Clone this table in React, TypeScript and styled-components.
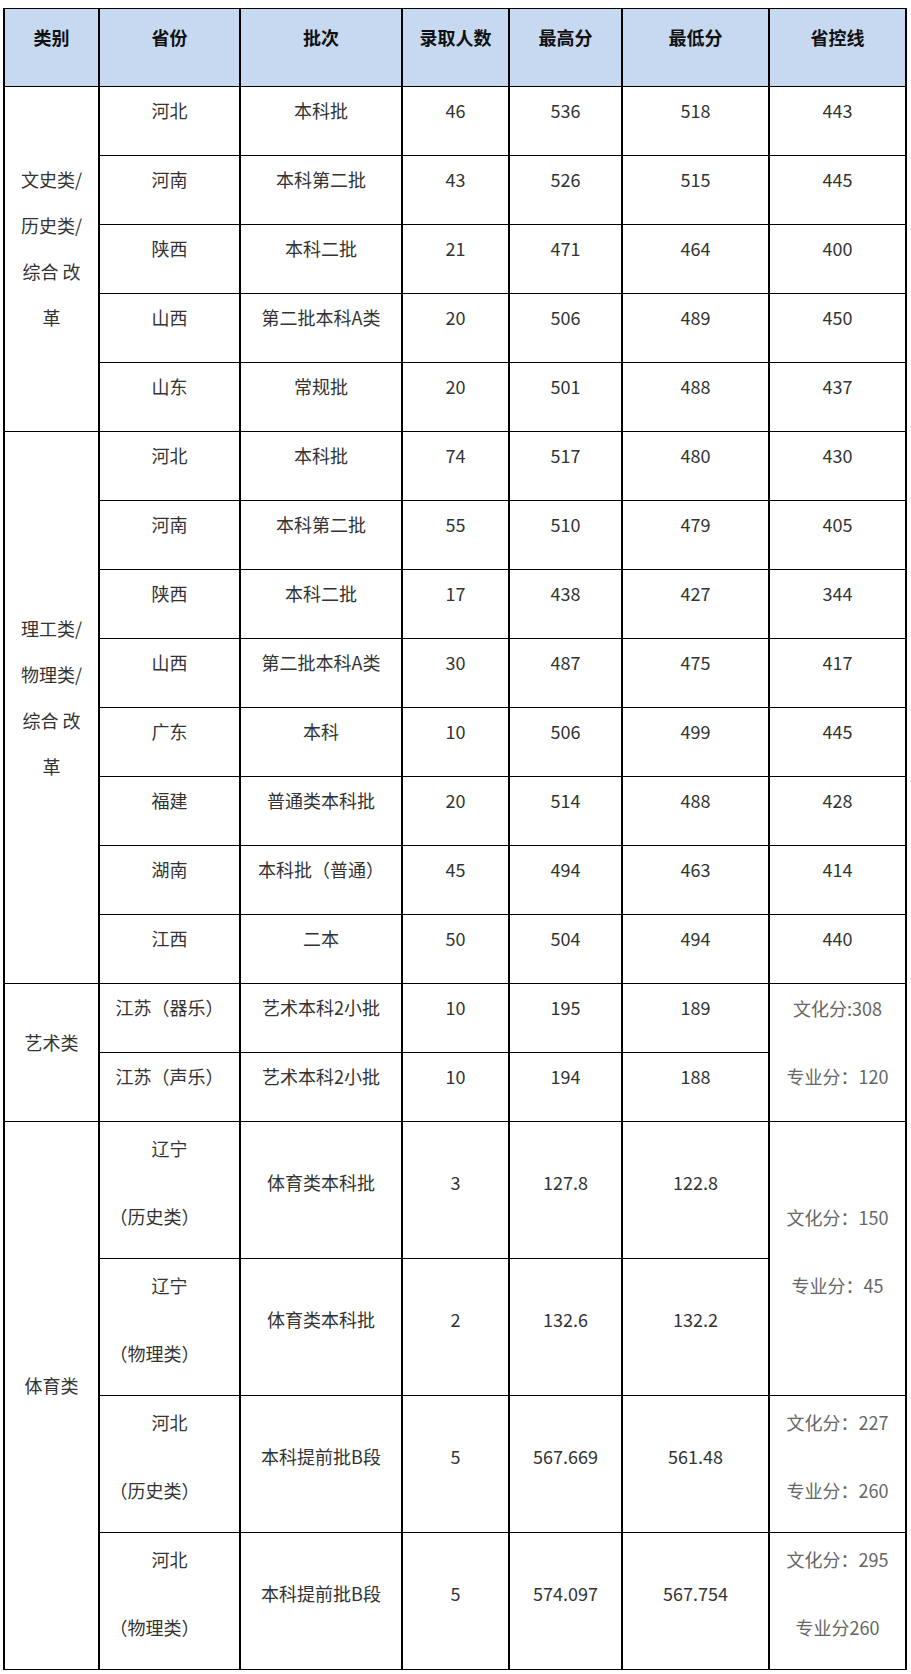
import React from 'react';
import styled, { createGlobalStyle } from 'styled-components';

const Global = createGlobalStyle`
  html, body { margin: 0; padding: 0; background: #ffffff; }
  body { font-family: "Noto Sans CJK SC", "Microsoft YaHei", sans-serif; }
`;

const Page = styled.div`
  padding: 8px 0 0 3px;
`;

const Table = styled.table`
  border-collapse: collapse;
  table-layout: fixed;
  width: 904px;
  font-size: 18px;
  color: #333333;
`;

const Row = styled.tr<{ $h: number }>`
  height: ${(p) => p.$h}px;
`;

const HeadCell = styled.th`
  background: #c6d9f1;
  border-top: 1px solid #000;
  border-bottom: 1px solid #000;
  border-left: 2px solid #000;
  border-right: 2px solid #000;
  font-weight: 700;
  color: #111111;
  padding: 0;
  text-align: center;
  vertical-align: middle;
`;

const Cell = styled.td`
  border-top: 1px solid #000;
  border-bottom: 1px solid #000;
  border-left: 2px solid #000;
  border-right: 2px solid #000;
  padding: 0;
  text-align: center;
  vertical-align: middle;
`;

const Line = styled.div<{ $gray?: boolean; $shift?: number; $compact?: boolean }>`
  padding: ${(p) => (p.$compact ? '9px' : '12px')} ${(p) => p.$shift ?? 0}px
    ${(p) => (p.$compact ? '31px' : '28px')} 0;
  line-height: 28px;
  white-space: nowrap;
  color: ${(p) => (p.$gray ? '#666666' : 'inherit')};
`;

const CatLines = styled.div`
  line-height: 46px;
  padding-bottom: 22px;
`;

const CatLine = styled.div`
  white-space: pre;
`;

type LineCell = { lines: string[]; span: number; gray?: boolean; compact?: boolean };
type DataRow = {
  prov: string[];
  batch: string;
  count: string;
  max: string;
  min: string;
  line?: LineCell;
};
type Group = { cat: string[]; h: number; compact: boolean; rows: DataRow[] };

const simple = (
  prov: string,
  batch: string,
  count: string,
  max: string,
  min: string,
  line: string
): DataRow => ({ prov: [prov], batch, count, max, min, line: { lines: [line], span: 1 } });

const groups: Group[] = [
  {
    cat: ['文史类/', '历史类/', '综合 改', '革'],
    h: 69,
    compact: true,
    rows: [
      simple('河北', '本科批', '46', '536', '518', '443'),
      simple('河南', '本科第二批', '43', '526', '515', '445'),
      simple('陕西', '本科二批', '21', '471', '464', '400'),
      simple('山西', '第二批本科A类', '20', '506', '489', '450'),
      simple('山东', '常规批', '20', '501', '488', '437'),
    ],
  },
  {
    cat: ['理工类/', '物理类/', '综合 改', '革'],
    h: 69,
    compact: true,
    rows: [
      simple('河北', '本科批', '74', '517', '480', '430'),
      simple('河南', '本科第二批', '55', '510', '479', '405'),
      simple('陕西', '本科二批', '17', '438', '427', '344'),
      simple('山西', '第二批本科A类', '30', '487', '475', '417'),
      simple('广东', '本科', '10', '506', '499', '445'),
      simple('福建', '普通类本科批', '20', '514', '488', '428'),
      simple('湖南', '本科批（普通）', '45', '494', '463', '414'),
      simple('江西', '二本', '50', '504', '494', '440'),
    ],
  },
  {
    cat: ['艺术类'],
    h: 69,
    compact: true,
    rows: [
      {
        prov: ['江苏（器乐）'],
        batch: '艺术本科2小批',
        count: '10',
        max: '195',
        min: '189',
        line: { lines: ['文化分:308', '专业分：120'], span: 2, gray: true },
      },
      { prov: ['江苏（声乐）'], batch: '艺术本科2小批', count: '10', max: '194', min: '188' },
    ],
  },
  {
    cat: ['体育类'],
    h: 137,
    compact: false,
    rows: [
      {
        prov: ['辽宁', '（历史类）'],
        batch: '体育类本科批',
        count: '3',
        max: '127.8',
        min: '122.8',
        line: { lines: ['文化分：150', '专业分：45'], span: 2, gray: true },
      },
      { prov: ['辽宁', '（物理类）'], batch: '体育类本科批', count: '2', max: '132.6', min: '132.2' },
      {
        prov: ['河北', '（历史类）'],
        batch: '本科提前批B段',
        count: '5',
        max: '567.669',
        min: '561.48',
        line: { lines: ['文化分：227', '专业分：260'], span: 1, gray: true },
      },
      {
        prov: ['河北', '（物理类）'],
        batch: '本科提前批B段',
        count: '5',
        max: '574.097',
        min: '567.754',
        line: { lines: ['文化分：295', '专业分260'], span: 1, gray: true },
      },
    ],
  },
];

const headers = ['类别', '省份', '批次', '录取人数', '最高分', '最低分', '省控线'];
const widths = [95, 141, 162, 107, 113, 147, 137];

export default function App() {
  return (
    <Page>
      <Global />
      <Table>
        <colgroup>
          {widths.map((w, i) => (
            <col key={i} style={{ width: w }} />
          ))}
        </colgroup>
        <thead>
          <Row $h={78}>
            {headers.map((h) => (
              <HeadCell key={h}>
                <Line $compact>{h}</Line>
              </HeadCell>
            ))}
          </Row>
        </thead>
        <tbody>
          {groups.map((g, gi) =>
            g.rows.map((r, ri) => (
              <Row $h={g.h} key={`${gi}-${ri}`}>
                {ri === 0 && (
                  <Cell rowSpan={g.rows.length}>
                    <CatLines>
                      {g.cat.map((c) => (
                        <CatLine key={c}>{c}</CatLine>
                      ))}
                    </CatLines>
                  </Cell>
                )}
                <Cell>
                  {r.prov.map((p, pi) => (
                    <Line key={pi} $compact={g.compact} $shift={pi > 0 ? 30 : 0}>
                      {p}
                    </Line>
                  ))}
                </Cell>
                <Cell>
                  <Line $compact={g.compact}>{r.batch}</Line>
                </Cell>
                <Cell>
                  <Line $compact={g.compact}>{r.count}</Line>
                </Cell>
                <Cell>
                  <Line $compact={g.compact}>{r.max}</Line>
                </Cell>
                <Cell>
                  <Line $compact={g.compact}>{r.min}</Line>
                </Cell>
                {r.line && (
                  <Cell rowSpan={r.line.span}>
                    {r.line.lines.map((l) => (
                      <Line key={l} $gray={r.line?.gray} $compact={g.compact}>
                        {l}
                      </Line>
                    ))}
                  </Cell>
                )}
              </Row>
            ))
          )}
        </tbody>
      </Table>
    </Page>
  );
}
